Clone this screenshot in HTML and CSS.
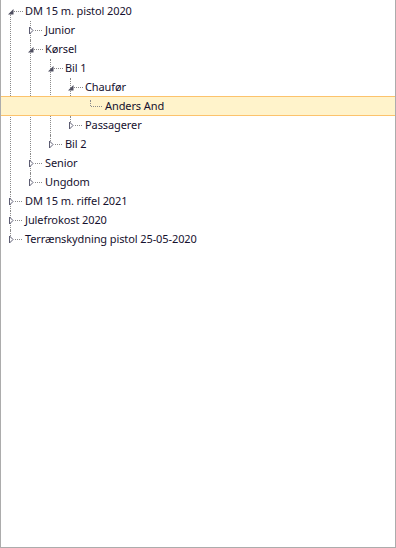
FILE: index.html
```html
<!DOCTYPE html>
<html lang="da">
<head>
  <meta charset="UTF-8">
  <meta name="viewport" content="width=device-width, initial-scale=1.0">
  <title>Tree view</title>
  <link rel="stylesheet" href="styles.css">
</head>
<body>

  <svg class="defs" width="0" height="0" aria-hidden="true">
    <symbol id="open" viewBox="0 0 22 19">
      <polygon points="12.5,7 12.5,12.5 7,12.5" fill="#4f4f60"/>
      <line x1="13" y1="9.5" x2="22" y2="9.5" stroke="#8a8a8a" stroke-dasharray="1 1"/>
    </symbol>
    <symbol id="closed" viewBox="0 0 22 19">
      <polygon points="8.5,6 12,9.5 8.5,13" fill="#fff" stroke="#5c5c72" stroke-width="1"/>
      <line x1="14" y1="9.5" x2="22" y2="9.5" stroke="#8a8a8a" stroke-dasharray="1 1"/>
    </symbol>
    <symbol id="leaf" viewBox="0 0 22 19">
      <line x1="10" y1="9.5" x2="21" y2="9.5" stroke="#8a8a8a" stroke-dasharray="1 1"/>
    </symbol>
  </svg>

  <div class="panel">
    <ul class="tree">
      <li>
        <div class="row"><svg class="toggle"><use href="#open"/></svg><span class="label">DM 15 m. pistol 2020</span></div>
        <ul>
          <li>
            <div class="row"><svg class="toggle"><use href="#closed"/></svg><span class="label">Junior</span></div>
          </li>
          <li>
            <div class="row"><svg class="toggle"><use href="#open"/></svg><span class="label">Kørsel</span></div>
            <ul>
              <li>
                <div class="row"><svg class="toggle"><use href="#open"/></svg><span class="label">Bil 1</span></div>
                <ul>
                  <li>
                    <div class="row"><svg class="toggle"><use href="#open"/></svg><span class="label">Chaufør</span></div>
                    <ul>
                      <li class="leaf">
                        <div class="row selected"><svg class="toggle"><use href="#leaf"/></svg><span class="label">Anders And</span></div>
                      </li>
                    </ul>
                  </li>
                  <li>
                    <div class="row"><svg class="toggle"><use href="#closed"/></svg><span class="label">Passagerer</span></div>
                  </li>
                </ul>
              </li>
              <li>
                <div class="row"><svg class="toggle"><use href="#closed"/></svg><span class="label">Bil 2</span></div>
              </li>
            </ul>
          </li>
          <li>
            <div class="row"><svg class="toggle"><use href="#closed"/></svg><span class="label">Senior</span></div>
          </li>
          <li>
            <div class="row"><svg class="toggle"><use href="#closed"/></svg><span class="label">Ungdom</span></div>
          </li>
        </ul>
      </li>
      <li>
        <div class="row"><svg class="toggle"><use href="#closed"/></svg><span class="label">DM 15 m. riffel 2021</span></div>
      </li>
      <li>
        <div class="row"><svg class="toggle"><use href="#closed"/></svg><span class="label">Julefrokost 2020</span></div>
      </li>
      <li>
        <div class="row"><svg class="toggle"><use href="#closed"/></svg><span class="label">Terrænskydning pistol 25-05-2020</span></div>
      </li>
    </ul>
  </div>

</body>
</html>
```

FILE: styles.css
```css
body {
  margin: 0;
  font-family: "Noto Sans", "Open Sans", sans-serif;
  font-size: 11px;
  letter-spacing: -0.1px;
  color: #16112e;
  background: #fff;
}

.defs {
  position: absolute;
  width: 0;
  height: 0;
}

.panel {
  box-sizing: border-box;
  height: 100vh;
  padding-top: 2px;
  border: 1px solid #acacac;
  border-top: none;
  overflow: hidden;
}

.tree,
.tree ul {
  list-style: none;
  margin: 0;
  padding: 0;
}

.tree ul {
  padding-left: 20px;
}

.tree li {
  position: relative;
}

/* sibling guide line */
.tree li::before {
  content: "";
  position: absolute;
  left: 9px;
  top: 0;
  bottom: 0;
  border-left: 1px dotted #8a8a8a;
}

.tree li:last-child::before {
  bottom: auto;
  height: 10px;
}

.tree > li:first-child::before {
  top: 10px;
}

.tree li.leaf::before {
  top: 4px;
  height: 6px;
}

.row {
  display: flex;
  align-items: center;
  height: 19px;
  white-space: nowrap;
}

.row.selected {
  height: 18px;
  margin-top: -1px;
  margin-left: -400px;
  padding-left: 400px;
  background: #fff3cb;
  border-top: 1px solid #fcc36c;
  border-bottom: 1px solid #fcc36c;
}

.toggle {
  position: relative;
  flex: none;
  width: 22px;
  height: 19px;
}

.label {
  margin-left: 2px;
  padding-bottom: 2px;
  line-height: 19px;
}
```
